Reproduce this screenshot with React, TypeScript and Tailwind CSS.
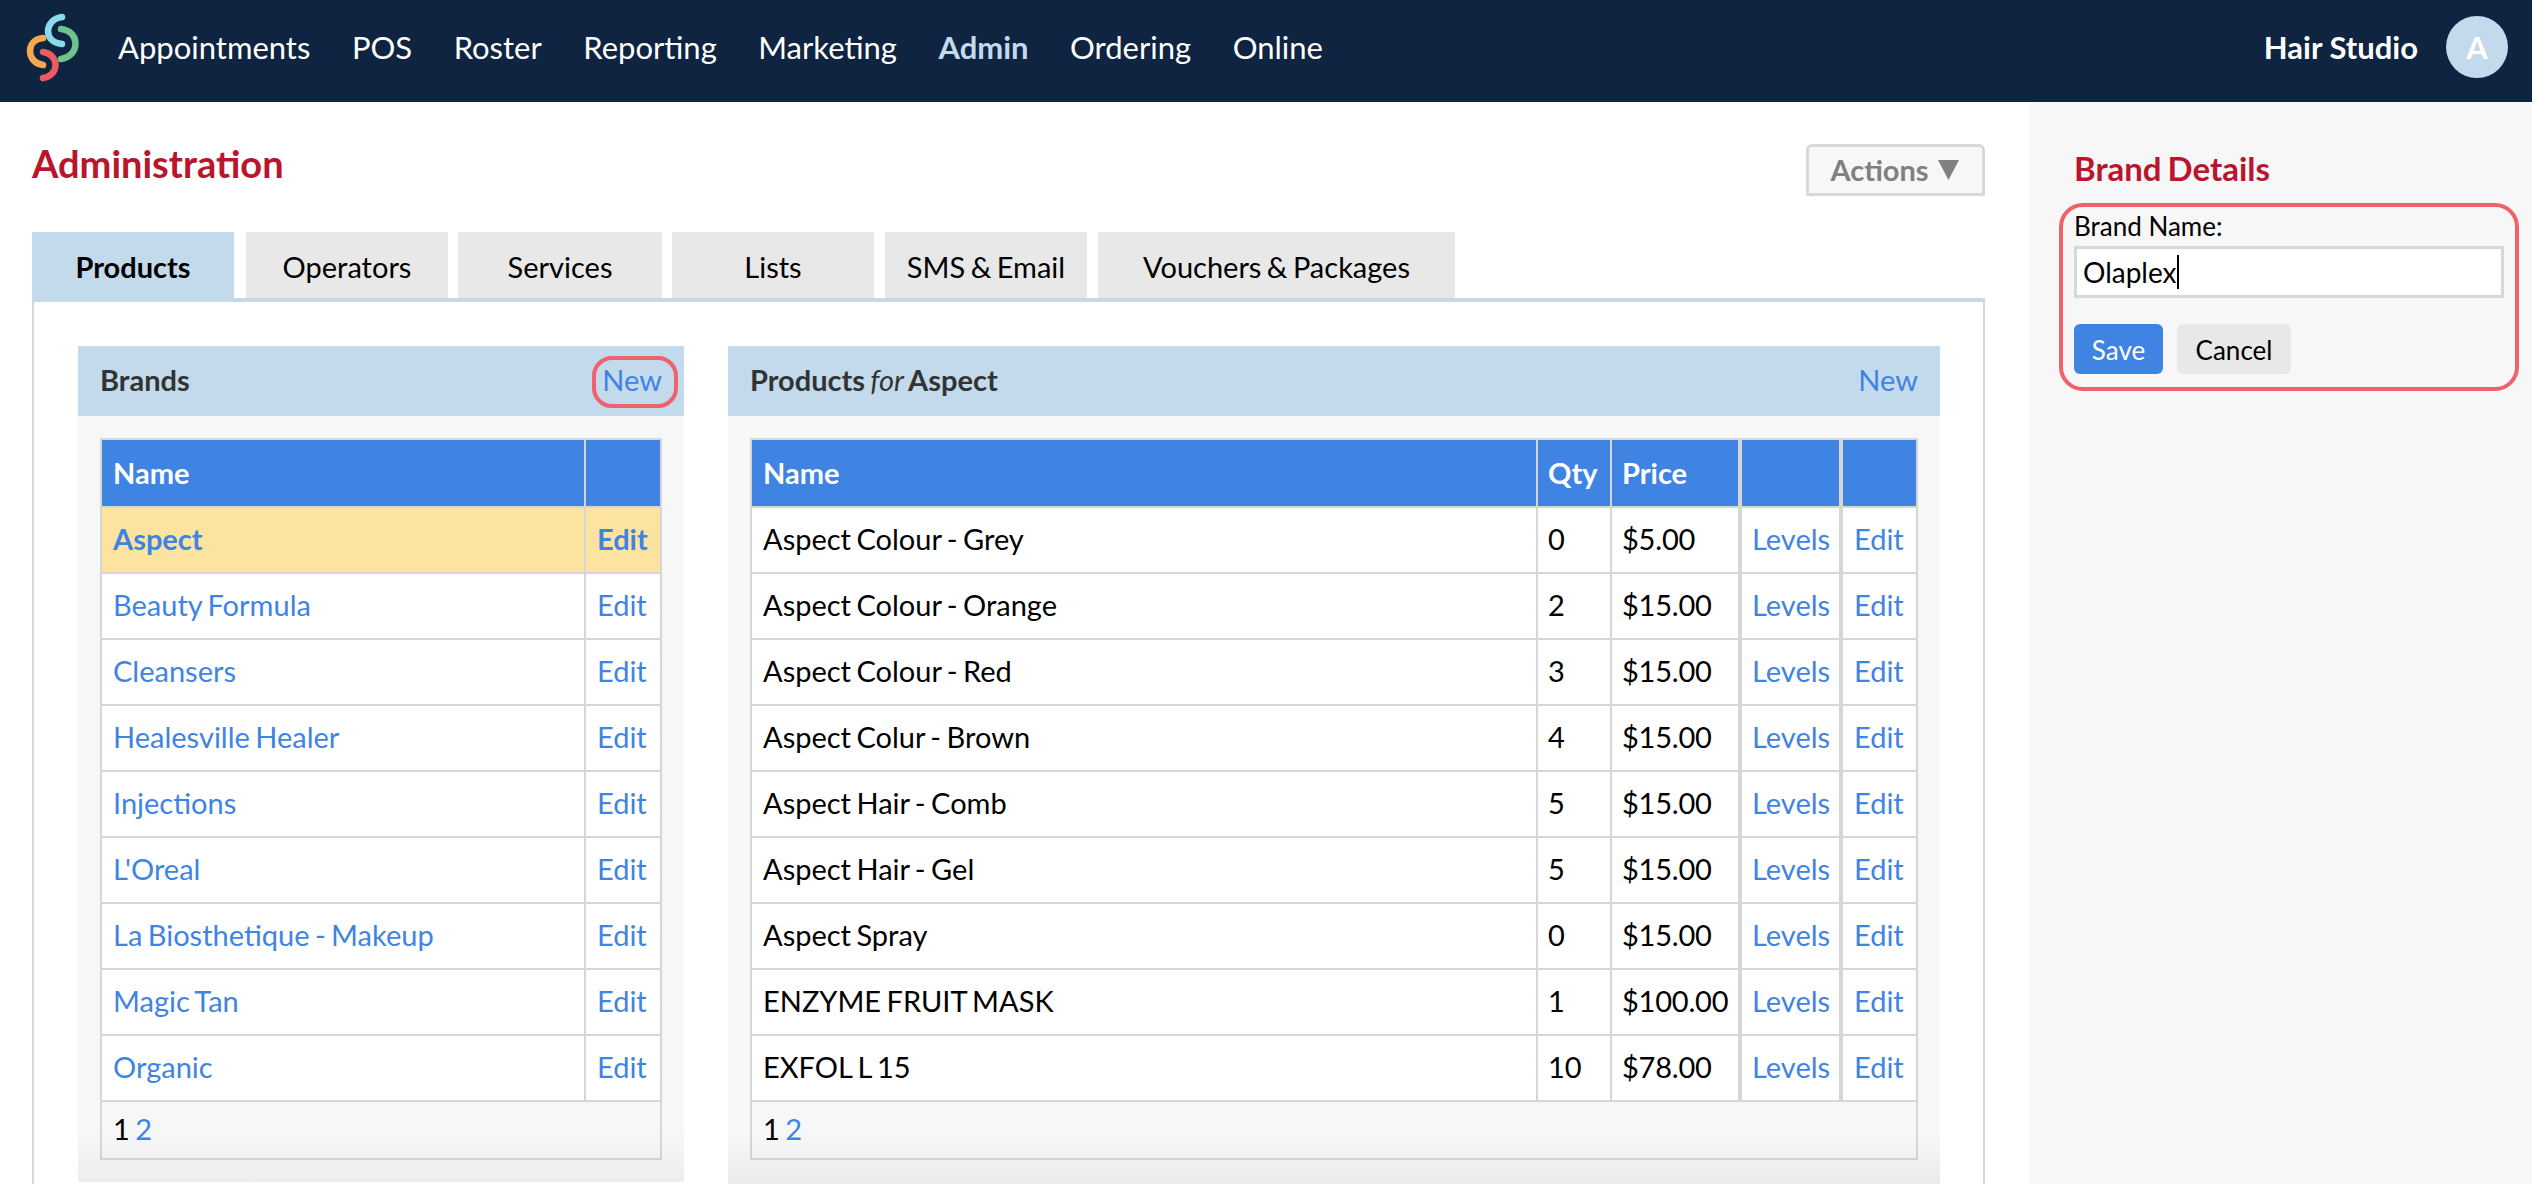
const navItems = ['Appointments', 'POS', 'Roster', 'Reporting', 'Marketing', 'Admin', 'Ordering', 'Online']
const tabs = [
  { label: 'Products', w: 'w-[202px]' },
  { label: 'Operators', w: 'w-[202px] ml-[12px]' },
  { label: 'Services', w: 'w-[204px] ml-[10px]' },
  { label: 'Lists', w: 'w-[202px] ml-[10px]' },
  { label: 'SMS & Email', w: 'w-[202px] ml-[11px]' },
  { label: 'Vouchers & Packages', w: 'w-[357px] ml-[11px]' },
]
const brands = ['Aspect', 'Beauty Formula', 'Cleansers', 'Healesville Healer', 'Injections', "L'Oreal", 'La Biosthetique - Makeup', 'Magic Tan', 'Organic']
const products = [
  ['Aspect Colour - Grey', '0', '$5.00'],
  ['Aspect Colour - Orange', '2', '$15.00'],
  ['Aspect Colour - Red', '3', '$15.00'],
  ['Aspect Colur - Brown', '4', '$15.00'],
  ['Aspect Hair - Comb', '5', '$15.00'],
  ['Aspect Hair - Gel', '5', '$15.00'],
  ['Aspect Spray', '0', '$15.00'],
  ['ENZYME FRUIT MASK', '1', '$100.00'],
  ['EXFOL L 15', '10', '$78.00'],
]

const cell = 'border-2 border-[#d6d6d6] px-[11px] pb-[3px] h-[66px] leading-none'
const tight = 'border-2 border-[#d6d6d6] px-[10px] pb-[3px] h-[66px] leading-none'
const head = 'border-2 border-[#d6d6d6] bg-[#3f84e2] text-white font-bold text-left px-[11px] h-[68px]'
const headTight = 'border-2 border-[#d6d6d6] bg-[#3f84e2] text-white font-bold text-left px-[10px] h-[68px]'
const link = 'text-[#3f84e2]'

function Logo() {
  return (
    <svg width="120" height="100" viewBox="0 0 120 100" className="absolute left-0 top-0" fill="none" strokeWidth="6.5" strokeLinecap="round">
      <path d="M43 38 C34 39 30 45 30 51 C30 58 35 64 43 65" stroke="#f5a850" />
      <path d="M43 52 C51 53 55.500 59 55.500 65 C55.500 72 50 77 43 78" stroke="#ec5a62" />
      <path d="M61 29 C70 30 75.500 36 75.500 43.500 C75.500 52 69 58 61 59" stroke="#6cc48c" />
      <path d="M62 17 C53 18 48 25 48 31 C48 38 53 43 62 44" stroke="#88dbe8" />
    </svg>
  )
}

function Header() {
  return (
    <header className="relative h-[102px] bg-[#0e2440] flex items-center justify-between pl-[118px] pr-[24px] pb-[8px] text-white text-[31px] [word-spacing:0]">
      <Logo />
      <nav className="flex gap-[41.500px]">
        {navItems.map((item) => (
          <a key={item} className={item === 'Admin' ? 'font-bold text-[#c2daec]' : ''}>{item}</a>
        ))}
      </nav>
      <div className="flex items-center gap-[28px]">
        <span className="font-bold">Hair Studio</span>
        <div className="w-[62px] h-[62px] rounded-full bg-[#c2daec] flex items-center justify-center font-bold">A</div>
      </div>
    </header>
  )
}

function PanelHeader({ children, ring }: { children: React.ReactNode; ring?: boolean }) {
  return (
    <div className="relative h-[70px] bg-[#c2daec] flex items-center justify-between pl-[22px] pr-[22px] pb-[3px] text-[#333]">
      <div className="font-bold">{children}</div>
      <a className={link}>New</a>
      {ring && <div className="absolute left-[514px] top-[10px] w-[86px] h-[52px] rounded-[20px] border-4 border-[#f0616b]"></div>}
    </div>
  )
}

function Pager({ span }: { span: number }) {
  return (
    <tr>
      <td colSpan={span} className="border-2 border-[#d6d6d6] bg-[#f7f7f7] px-[11px] pb-[3px] h-[58px]">
        1 <a className={link}>2</a>
      </td>
    </tr>
  )
}

function BrandsTable() {
  return (
    <table className="table-fixed border-collapse w-[560px] bg-white">
      <colgroup>
        <col className="w-[484px]" />
        <col className="w-[76px]" />
      </colgroup>
      <thead>
        <tr>
          <th className={head}>Name</th>
          <th className={head}></th>
        </tr>
      </thead>
      <tbody>
        {brands.map((b) => (
          <tr key={b} className={b === 'Aspect' ? 'bg-[#fde3a0] font-bold' : ''}>
            <td className={cell}><a className={link}>{b}</a></td>
            <td className={cell}><a className={link}>Edit</a></td>
          </tr>
        ))}
        <Pager span={2} />
      </tbody>
    </table>
  )
}

function ProductsTable() {
  return (
    <table className="table-fixed border-collapse w-[1166px] bg-white">
      <colgroup>
        <col className="w-[786px]" />
        <col className="w-[74px]" />
        <col className="w-[129px]" />
        <col className="w-[101px]" />
        <col className="w-[76px]" />
      </colgroup>
      <thead>
        <tr>
          <th className={head}>Name</th>
          <th className={headTight}>Qty</th>
          <th className={headTight}>Price</th>
          <th className={`${head} border-l-4`}></th>
          <th className={`${head} border-l-4`}></th>
        </tr>
      </thead>
      <tbody>
        {products.map(([name, qty, price]) => (
          <tr key={name}>
            <td className={cell}>{name}</td>
            <td className={tight}>{qty}</td>
            <td className={`${tight} tracking-[-0.2px]`}>{price}</td>
            <td className={`${tight} border-l-4 whitespace-nowrap`}><a className={link}>Levels</a></td>
            <td className={`${cell} border-l-4`}><a className={link}>Edit</a></td>
          </tr>
        ))}
        <Pager span={5} />
      </tbody>
    </table>
  )
}

export default function App() {
  return (
    <div className="relative w-[2532px] h-[1184px] overflow-hidden bg-white text-black text-[29px] [font-family:Lato,sans-serif] [word-spacing:-2px]">
      <Header />
      <div className="flex h-[1082px]">
        <main className="w-[2030px] pl-[32px] pr-[45px]">
          <div className="flex justify-between items-start h-[130px] pt-[38px]">
            <h1 className="text-[38px] leading-[46px] font-bold text-[#b9152c]">Administration</h1>
            <button className="w-[179px] h-[52px] mt-[4px] border-[3px] border-[#d8d8d8] rounded-t-[6px] bg-[#f7f7f7] text-[#808080] font-bold flex items-center justify-center gap-[9px] pr-[2px]">
              Actions
              <svg width="21" height="20" viewBox="0 0 21 20" className="fill-[#808080]"><polygon points="0,0 21,0 10.500,20" /></svg>
            </button>
          </div>
          <div className="flex h-[66px]">
            {tabs.map((t) => (
              <div key={t.label} className={`${t.w} flex items-center justify-center pt-[3px] ${t.label === 'Products' ? 'bg-[#c2daec] font-bold' : 'bg-[#e8e8e8]'}`}>{t.label}</div>
            ))}
          </div>
          <section className="h-[900px] border-t-4 border-t-[#c2daec] border-x-2 border-x-[#d6d6d6] pl-[44px] pt-[44px] flex gap-[44px]">
            <div className="relative w-[606px] h-[836px] bg-[#f7f7f7]">
              <PanelHeader ring>Brands</PanelHeader>
              <div className="pl-[22px] pt-[22px]"><BrandsTable /></div>
              <div className="absolute inset-x-0 bottom-0 h-[50px] bg-gradient-to-t from-black/[0.04] to-transparent"></div>
            </div>
            <div className="relative w-[1212px] h-[838px] bg-[#f7f7f7]">
              <PanelHeader>Products <i className="font-normal">for</i> Aspect</PanelHeader>
              <div className="pl-[22px] pt-[22px]"><ProductsTable /></div>
              <div className="absolute inset-x-0 bottom-0 h-[50px] bg-gradient-to-t from-black/[0.05] to-transparent"></div>
            </div>
          </section>
        </main>
        <aside className="w-[502px] bg-[#f7f7f7] pl-[45px] pt-[46px]">
          <h2 className="text-[33px] leading-[40px] -ml-[1px] font-bold text-[#b9152c]">Brand Details</h2>
          <div className="relative -ml-[16px] mt-[15px] w-[460px] h-[188px] rounded-[24px] border-4 border-[#f0616b] pl-[11px] pt-[3px]">
            <label className="block text-[26px] leading-[32px] [word-spacing:0]">Brand Name:</label>
            <div className="relative mt-[4px] w-[430px] h-[52px] border-[3px] border-[#d8d8d8] bg-white pl-[6px] flex items-center text-[28px]">
              Olaplex<span className="w-[2px] h-[34px] bg-black"></span>
            </div>
            <div className="flex gap-[14px] mt-[26px] text-[26px]">
              <button className="w-[89px] h-[50px] pt-[2px] rounded-[6px] bg-[#3f84e2] text-white">Save</button>
              <button className="w-[114px] h-[50px] pt-[2px] rounded-[6px] bg-[#e8e8e8]">Cancel</button>
            </div>
          </div>
        </aside>
      </div>
    </div>
  )
}
